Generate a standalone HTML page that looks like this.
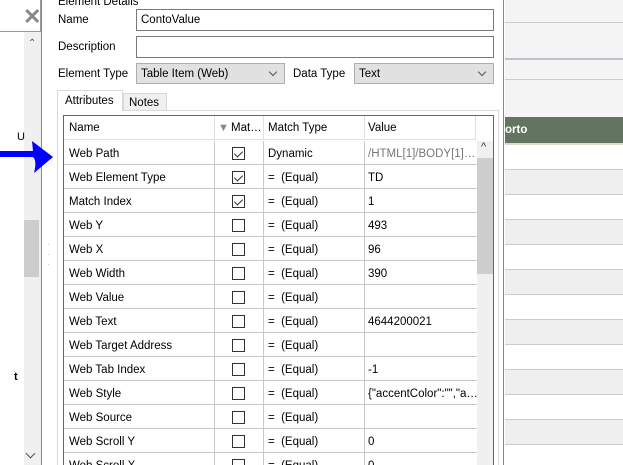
<!DOCTYPE html>
<html><head><style>
*{box-sizing:border-box;margin:0;padding:0}
html,body{width:623px;height:465px;overflow:hidden}
body{background:#fff;font-family:"Liberation Sans",sans-serif;font-size:11.5px;color:#000;position:relative}
.a{position:absolute}
.inp{position:absolute;border:1px solid #7a7a7a;background:#fff;height:22px;padding:4px 4px}
.sel{position:absolute;border:1px solid #adadad;background:#e1e1e1;height:21px;padding:4px 4px}
.sel:after{content:"";position:absolute;right:8px;top:5px;width:5px;height:5px;border-right:1px solid #555;border-bottom:1px solid #555;transform:rotate(45deg)}
.row{position:absolute;left:64px;width:412px;height:24px;border-bottom:1px solid #c8c8c8}
.row span{position:absolute;top:7px}
.cb{position:absolute;left:168px;top:5px;width:13px;height:13px;border:1px solid #333;background:#fff}
.cb.c:after{content:"";position:absolute;left:3px;top:1px;width:4px;height:7px;border-right:1.5px solid #333;border-bottom:1.5px solid #333;transform:rotate(45deg)}
.vl{position:absolute;top:0;bottom:0;width:1px;background:#c8c8c8}
</style></head><body>
<div class="a" style="left:0;top:0;width:41px;height:32px;border-bottom:1px solid #999;border-right:1px solid #999"></div>
<div class="a" style="left:23px;top:4px;font-size:22px;color:#888;font-weight:bold">✕</div>
<div class="a" style="left:24px;top:32px;width:17px;height:433px;background:#f0f0f0"></div>
<div class="a" style="left:24px;top:220px;width:15px;height:57px;background:#cdcdcd"></div>
<div class="a" style="left:28px;top:38px;font-size:10px;color:#555">⌃</div>
<div class="a" style="left:27px;top:450px;width:7px;height:7px;border-right:1.5px solid #555;border-bottom:1.5px solid #555;transform:rotate(45deg)"></div>
<div class="a" style="left:41px;top:0;width:1px;height:465px;background:#888"></div>
<div class="a" style="left:17px;top:131px;font-size:11px">U</div>
<div class="a" style="left:14px;top:371px;font-size:11px;font-weight:bold">t</div>
<div class="a" style="left:58px;top:-4px">Element Details</div>
<div class="a" style="left:58px;top:14px">Name</div>
<div class="inp" style="left:136px;top:9px;width:358px">ContoValue</div>
<div class="a" style="left:58px;top:41px">Description</div>
<div class="inp" style="left:136px;top:36px;width:358px"></div>
<div class="a" style="left:58px;top:68px">Element Type</div>
<div class="sel" style="left:136px;top:63px;width:149px">Table Item (Web)</div>
<div class="a" style="left:293px;top:68px">Data Type</div>
<div class="sel" style="left:354px;top:63px;width:140px">Text</div>
<div class="a" style="left:57px;top:110px;width:442px;height:360px;border:1px solid #d9d9d9"></div>
<div class="a" style="left:57px;top:90px;width:66px;height:21px;border:1px solid #d9d9d9;border-bottom:none;background:#fff;padding:4px 7px">Attributes</div>
<div class="a" style="left:123px;top:93px;width:44px;height:18px;border:1px solid #d9d9d9;background:#f0f0f0;padding:3px 5px">Notes</div>
<div class="a" style="left:63px;top:115px;width:431px;height:360px;border:1px solid #666;background:#fff"></div>
<div class="a" style="left:64px;top:116px;width:412px;height:24px;border-bottom:1px solid #e0e0e0">
<span class="a" style="left:5px;top:6px">Name</span>
<span class="a" style="left:154px;top:6px;color:#888;font-size:11px">▼</span>
<span class="a" style="left:167px;top:6px">Mat…</span>
<span class="a" style="left:204px;top:6px">Match Type</span>
<span class="a" style="left:304px;top:6px">Value</span>
<div class="vl" style="left:150px;background:#e0e0e0"></div><div class="vl" style="left:199px;background:#e0e0e0"></div><div class="vl" style="left:300px;background:#e0e0e0"></div><div class="vl" style="left:411px;background:#e0e0e0"></div>
</div>
<div class="a" style="left:477px;top:141px;width:16px;height:330px;background:#f0f0f0"></div>
<div class="a" style="left:477px;top:158px;width:16px;height:116px;background:#cdcdcd"></div>
<div class="a" style="left:481px;top:141px;font-size:11px;color:#333">^</div>
<div id="rows"></div>
<div class="a" style="left:47px;top:240px;color:#aaa;font-size:8px;line-height:10px">·<br>·<br>·</div>
<div class="a" style="left:503px;top:0;width:1px;height:465px;background:#888"></div>
<div class="a" style="left:505px;top:0;width:118px;height:465px;background:#f4f4f4"></div>
<div class="a" style="left:505px;top:22px;width:118px;height:1px;background:#ccc"></div>
<div class="a" style="left:505px;top:58px;width:118px;height:2px;background:#bcc2cc"></div>
<div class="a" style="left:505px;top:79px;width:118px;height:1px;background:#ccc"></div>
<div class="a" style="left:505px;top:117px;width:118px;height:26px;background:#637561;color:#fff;font-weight:bold;padding:7px 0 0 0">orto</div>
<div class="a" style="left:505px;top:143px;width:118px;height:2px;background:#dcdcc8"></div>
<div id="rr"></div>
<svg class="a" style="left:0;top:140px" width="56" height="34"><path d="M0 11 H33 L32 1 L53 17 L34 33 C36 25 36 20 33 17 H0 Z" fill="#0000ff"/></svg>
<script>
var E="=&nbsp;&nbsp;(Equal)";
var d=[["Web Path",1,"Dynamic","/HTML[1]/BODY[1]…"],["Web Element Type",1,E,"TD"],["Match Index",1,E,"1"],["Web Y",0,E,"493"],["Web X",0,E,"96"],["Web Width",0,E,"390"],["Web Value",0,E,""],["Web Text",0,E,"4644200021"],["Web Target Address",0,E,""],["Web Tab Index",0,E,"-1"],["Web Style",0,E,"{\"accentColor\":\"\",\"a…"],["Web Source",0,E,""],["Web Scroll Y",0,E,"0"],["Web Scroll X",0,E,"0"]];
var h="";d.forEach(function(r,i){h+='<div class="row" style="top:'+(141+i*24)+'px;width:413px"><span style="left:5px">'+r[0]+'</span><div class="cb'+(r[1]?' c':'')+'" style="top:6px"></div><span style="left:204px">'+r[2]+'</span><span style="left:304px;'+(i==0?'color:#777':'')+'">'+r[3]+'</span><div class="vl" style="left:150px"></div><div class="vl" style="left:199px"></div><div class="vl" style="left:300px"></div></div>'});
document.getElementById("rows").innerHTML=h;
var g="";for(var i=0;i<13;i++){g+='<div class="a" style="left:505px;top:'+(145+i*25)+'px;width:118px;height:25px;background:'+(i%2?'#efefef':'#fff')+';border-bottom:1px solid #ccc"></div>'}
document.getElementById("rr").innerHTML=g;
</script>
</body></html>
